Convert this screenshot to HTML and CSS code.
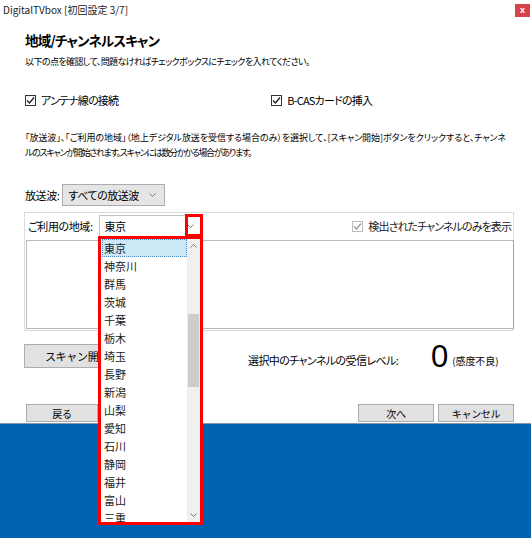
FILE: index.html
```html
<!DOCTYPE html>
<html>

<head>
    <meta charset="utf-8">
    <title>DigitalTVbox [初回設定 3/7]</title>
    <link rel="stylesheet" href="styles.css">
</head>

<body>
    <div class="window">
        <div class="titlebar">
            <span class="title">DigitalTVbox [初回設定 3/7]</span>
            <span class="close">x</span>
        </div>

        <div class="content">
            <h1>地域/チャンネルスキャン</h1>
            <p class="lead">以下の点を確認して、問題なければチェックボックスにチェックを入れてください。</p>

            <div class="checks">
                <label class="check">
                    <span class="box"><svg width="9" height="9" viewBox="0 0 9 9"><polyline points="1,4.5 3.5,7 8,1.5" /></svg></span>
                    アンテナ線の接続
                </label>
                <label class="check bcas">
                    <span class="box"><svg width="9" height="9" viewBox="0 0 9 9"><polyline points="1,4.5 3.5,7 8,1.5" /></svg></span>
                    B-CASカードの挿入
                </label>
            </div>

            <div class="desc">
                <p class="desc-line">「放送波」、「ご利用の地域」（地上デジタル放送を受信する場合のみ）を選択して、[スキャン開始]ボタンをクリックすると、チャンネ</p>
                <p class="desc-line short">ルのスキャンが開始されます。スキャンには数分かかる場合があります。</p>
            </div>

            <div class="wave">
                <span class="label">放送波:</span>
                <div class="combo wave-combo">
                    <span>すべての放送波</span>
                    <svg class="arrow" width="7" height="4" viewBox="0 0 7 4"><polyline points="0.5,0.5 3.5,3.5 6.5,0.5" /></svg>
                </div>
            </div>

            <div class="group">
                <div class="group-row">
                    <span class="label">ご利用の地域:</span>
                    <div class="combo area-combo">
                        <span>東京</span>
                        <svg class="arrow" width="7" height="4" viewBox="0 0 7 4"><polyline points="0.5,0.5 3.5,3.5 6.5,0.5" /></svg>
                    </div>
                    <label class="check only disabled">
                        <span class="box"><svg width="9" height="9" viewBox="0 0 9 9"><polyline points="1,4.5 3.5,7 8,1.5" /></svg></span>
                        検出されたチャンネルのみを表示
                    </label>
                </div>
                <div class="channel-list"></div>
            </div>

            <div class="scan">
                <button class="btn scan-btn">スキャン開始</button>
                <div class="level">
                    <span class="level-label">選択中のチャンネルの受信レベル:</span>
                    <span class="level-value">0</span>
                    <span class="level-note">(感度不良)</span>
                </div>
            </div>

            <div class="buttons">
                <button class="btn back">戻る</button>
                <button class="btn next">次へ</button>
                <button class="btn cancel">キャンセル</button>
            </div>
        </div>

        <!-- highlight around the combo arrow -->
        <div class="mark arrow-mark"></div>

        <!-- open dropdown of ご利用の地域 -->
        <div class="dropdown">
            <ul class="options">
                <li class="selected">東京</li>
                <li>神奈川</li>
                <li>群馬</li>
                <li>茨城</li>
                <li>千葉</li>
                <li>栃木</li>
                <li>埼玉</li>
                <li>長野</li>
                <li>新潟</li>
                <li>山梨</li>
                <li>愛知</li>
                <li>石川</li>
                <li>静岡</li>
                <li>福井</li>
                <li>富山</li>
                <li>三重</li>
            </ul>
            <div class="scrollbar">
                <div class="sb-btn"><svg width="7" height="4" viewBox="0 0 7 4"><polyline points="0.5,3.5 3.5,0.5 6.5,3.5" /></svg></div>
                <div class="sb-track"><div class="sb-thumb"></div></div>
                <div class="sb-btn"><svg width="7" height="4" viewBox="0 0 7 4"><polyline points="0.5,0.5 3.5,3.5 6.5,0.5" /></svg></div>
            </div>
        </div>
    </div>
</body>

</html>
```

FILE: styles.css
```css
* {
    box-sizing: border-box;
}

body {
    margin: 0;
    width: 531px;
    height: 538px;
    overflow: hidden;
    background-color: #0063b1;
    font-family: "Noto Sans CJK JP", sans-serif;
    font-feature-settings: "palt";
    color: #000;
}

.window {
    position: relative;
    height: 424px;
    background-color: #fff;
    border-bottom: 1px solid #8796a6;
}

.titlebar {
    display: flex;
    height: 20px;
    padding-left: 3px;
}

.title {
    font-size: 10px;
    line-height: 20px;
    color: #222;
}

.close {
    margin-left: auto;
    margin-top: 4px;
    margin-right: 1px;
    width: 15px;
    height: 13px;
    background-color: #d6434b;
    color: #fff;
    font-family: "Liberation Sans", sans-serif;
    font-size: 9px;
    font-weight: bold;
    line-height: 12px;
    text-align: center;
}

.content {
    padding: 0 17px 0 24px;
}

h1 {
    margin: 10px 0 0 1px;
    font-size: 13.5px;
    line-height: 20px;
    letter-spacing: -0.8px;
}

.lead {
    margin: 5px 0 0 1px;
    font-size: 9px;
    line-height: 14px;
    letter-spacing: -0.6px;
}

.checks {
    display: flex;
    margin-top: 24px;
    height: 14px;
}

.check {
    display: flex;
    align-items: center;
    font-size: 11px;
    line-height: 14px;
    letter-spacing: -0.8px;
}

.check .box {
    display: flex;
    align-items: center;
    justify-content: center;
    width: 11px;
    height: 11px;
    margin: 0 5px 0 1px;
    border: 1px solid #333;
    background-color: #fff;
}

.check .box polyline {
    fill: none;
    stroke: #222;
    stroke-width: 1.4;
}

.check.bcas {
    margin-left: 152px;
}

.check.disabled {
    color: #222;
}

.check.disabled .box {
    border-color: #bcbcbc;
}

.check.disabled .box polyline {
    stroke: #9a9a9a;
}

.desc {
    margin: 23px 0 0 1px;
    font-size: 9px;
    line-height: 15px;
    white-space: nowrap;
}

.desc-line {
    margin: 0;
    letter-spacing: -0.05px;
}

.desc-line.short {
    letter-spacing: -1.3px;
}

.wave {
    display: flex;
    align-items: center;
    margin-top: 24px;
    height: 22px;
}

.label {
    font-size: 11px;
    letter-spacing: -0.4px;
    margin-left: 1px;
}

.combo {
    display: flex;
    align-items: center;
    height: 22px;
    border: 1px solid #acacac;
    font-size: 11px;
    letter-spacing: -0.5px;
}

.combo .arrow {
    margin-left: auto;
}

.combo .arrow polyline,
.scrollbar polyline {
    fill: none;
    stroke: #777;
    stroke-width: 1;
}

.wave-combo {
    width: 103px;
    margin-left: 3px;
    padding: 0 8px 0 5px;
    background-color: #e5e5e5;
}

.group {
    margin-top: 6px;
    height: 119px;
    border: 1px solid #dcdcdc;
    padding: 1px 0 0 1px;
}

.group-row {
    display: flex;
    align-items: center;
    height: 24px;
}

.group-row .label {
    margin-left: 2px;
}

.area-combo {
    width: 102px;
    margin-left: 6px;
    padding: 0 6px 0 5px;
    background-color: #fff;
    border-color: #c4c4c4;
}

.check.only {
    margin-left: auto;
    margin-right: 2px;
    letter-spacing: -0.9px;
}

.channel-list {
    margin-top: 2px;
    height: 89px;
    border: 1px solid #b9b9b9;
    border-right-color: #a0a0a0;
    margin-right: -1px;
}

.btn {
    height: 18px;
    padding: 0;
    border: 1px solid #adadad;
    background-color: #e1e1e1;
    font-family: inherit;
    font-size: 10px;
    letter-spacing: -0.3px;
    color: #000;
}

.scan {
    display: flex;
    align-items: center;
    margin-top: 9px;
}

.scan-btn {
    width: 106px;
    height: 24px;
    font-size: 11px;
}

.level {
    display: flex;
    align-items: center;
    margin-top: 9px;
    margin-left: 118px;
}

.level-label {
    width: 184px;
    font-size: 11px;
    letter-spacing: -0.6px;
}

.level-value {
    font-family: "Liberation Sans", sans-serif;
    font-size: 31px;
    line-height: 28px;
    margin-top: -6px;
    margin-left: -1px;
}

.level-note {
    margin-left: 4px;
    font-size: 10px;
    letter-spacing: -0.1px;
}

.buttons {
    display: flex;
    gap: 4px;
    margin-top: 33px;
}

.back {
    width: 72px;
    margin-left: 2px;
}

.next {
    width: 76px;
    margin-left: auto;
}

.cancel {
    width: 76px;
}

.mark {
    position: absolute;
    border: 3px solid #ff0000;
}

.arrow-mark {
    left: 185px;
    top: 214px;
    width: 18px;
    height: 23px;
}

.dropdown {
    position: absolute;
    left: 98px;
    top: 236px;
    width: 105px;
    height: 289px;
    display: flex;
    border: 3px solid #ff0000;
    background-color: #fff;
}

.options {
    flex: 1;
    margin: 0;
    padding: 0 0 0 1px;
    list-style: none;
    overflow: hidden;
}

.options li {
    height: 18px;
    padding-left: 2px;
    font-size: 11px;
    line-height: 18px;
    color: #1a1a1a;
}

.options li.selected {
    background-color: #cce8f6;
    outline: 1px dotted #4a90c8;
    outline-offset: -1px;
}

.scrollbar {
    display: flex;
    flex-direction: column;
    width: 13px;
    background-color: #f0f0f0;
}

.sb-btn {
    display: flex;
    align-items: center;
    justify-content: center;
    height: 14px;
}

.sb-track {
    flex: 1;
}

.sb-thumb {
    margin: 61px 1px 0;
    height: 73px;
    background-color: #cdcdcd;
}
```
